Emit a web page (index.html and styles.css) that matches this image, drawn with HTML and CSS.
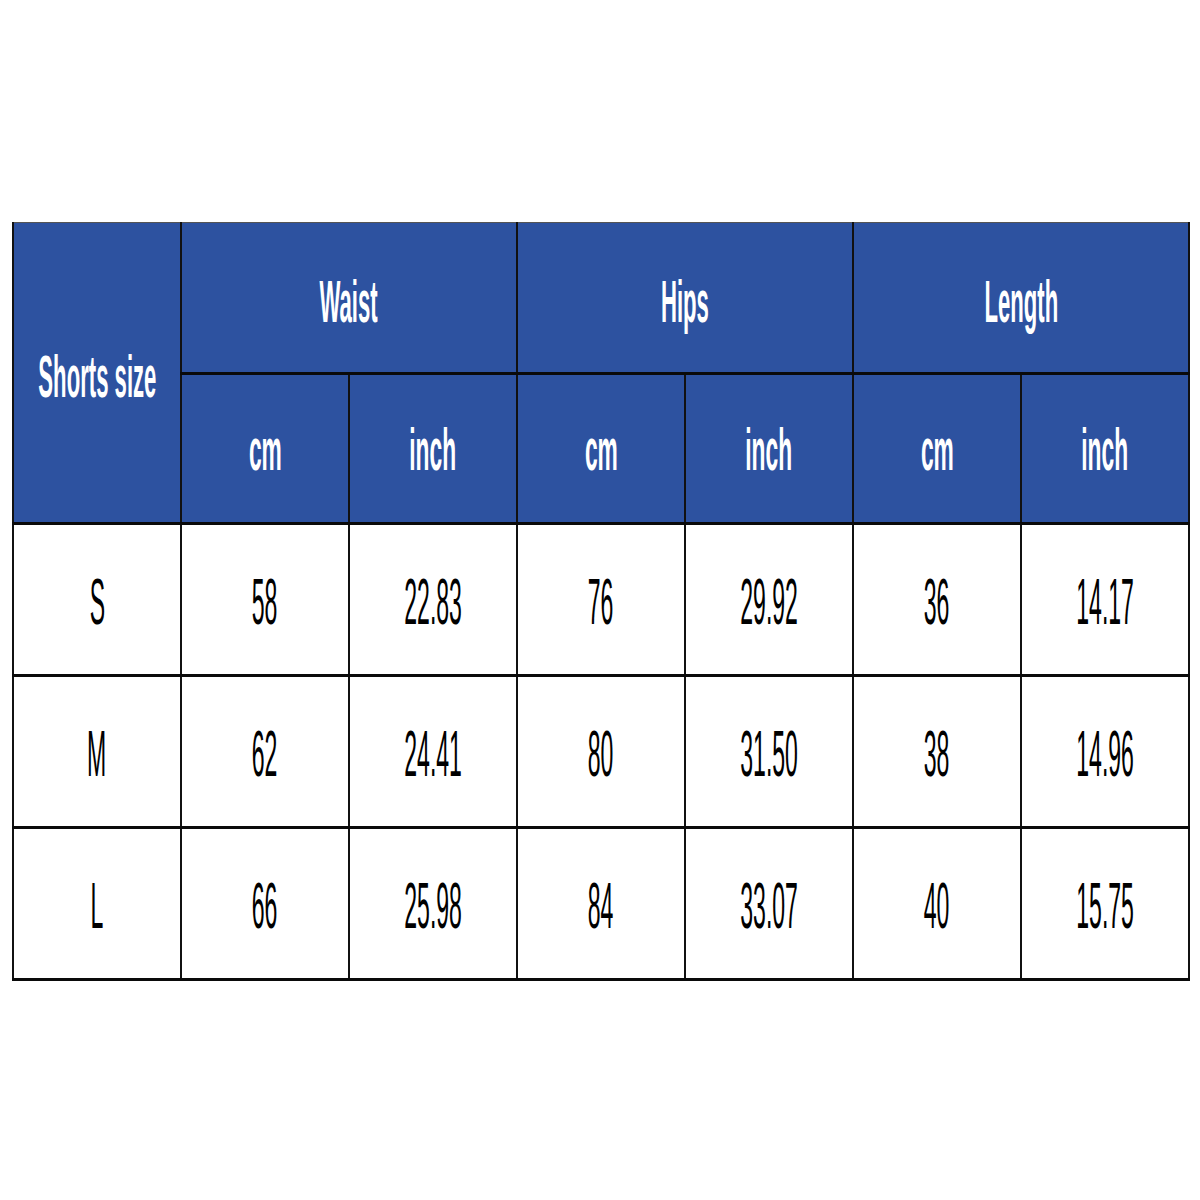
FILE: index.html
```html
<!DOCTYPE html>
<html>
<head>
<meta charset="utf-8">
<link rel="stylesheet" href="styles.css">
</head>
<body>
<table class="size-table">
  <colgroup>
    <col class="c"><col class="c"><col class="c"><col class="c"><col class="c"><col class="c"><col class="c">
  </colgroup>
  <tr class="head1">
    <th rowspan="2" class="size-head"><span class="t">Shorts size</span></th>
    <th colspan="2"><span class="t">Waist</span></th>
    <th colspan="2"><span class="t">Hips</span></th>
    <th colspan="2"><span class="t">Length</span></th>
  </tr>
  <tr class="head2">
    <th><span class="t">cm</span></th>
    <th><span class="t">inch</span></th>
    <th><span class="t">cm</span></th>
    <th><span class="t">inch</span></th>
    <th><span class="t">cm</span></th>
    <th><span class="t">inch</span></th>
  </tr>
  <tr class="data">
    <td><span class="t">S</span></td>
    <td><span class="t">58</span></td>
    <td><span class="t">22.83</span></td>
    <td><span class="t">76</span></td>
    <td><span class="t">29.92</span></td>
    <td><span class="t">36</span></td>
    <td><span class="t">14.17</span></td>
  </tr>
  <tr class="data">
    <td><span class="t">M</span></td>
    <td><span class="t">62</span></td>
    <td><span class="t">24.41</span></td>
    <td><span class="t">80</span></td>
    <td><span class="t">31.50</span></td>
    <td><span class="t">38</span></td>
    <td><span class="t">14.96</span></td>
  </tr>
  <tr class="data">
    <td><span class="t">L</span></td>
    <td><span class="t">66</span></td>
    <td><span class="t">25.98</span></td>
    <td><span class="t">84</span></td>
    <td><span class="t">33.07</span></td>
    <td><span class="t">40</span></td>
    <td><span class="t">15.75</span></td>
  </tr>
</table>
</body>
</html>
```

FILE: styles.css
```css
html, body {
  margin: 0;
  padding: 0;
  background: #ffffff;
}

body {
  font-family: "Liberation Sans", Arial, sans-serif;
}

.size-table {
  margin: 222px 0 0 12px;
  border-collapse: collapse;
  table-layout: fixed;
  width: 1176px;
  border-top: 1px solid #555;
}

.size-table .c {
  width: 168px;
}

.size-table th,
.size-table td {
  padding: 0;
  text-align: center;
  vertical-align: middle;
  border-left: 2px solid #111;
  border-right: 2px solid #111;
  border-bottom: 3px solid #0a0a0a;
  overflow: visible;
  white-space: nowrap;
}

.size-table th {
  background: #2d52a0;
  color: #ffffff;
  font-weight: bold;
}

.t {
  display: inline-block;
  margin: 0 -150px;
  transform: scaleX(0.375);
  transform-origin: center;
}

.head1 th {
  height: 140px;
  font-size: 59px;
  padding-top: 9px;
}

.head1 .size-head {
  padding-top: 8px;
}

.head2 th {
  height: 146px;
  font-size: 60px;
  padding-top: 1px;
}

.head2 .t {
  transform: scaleX(0.38);
}

.data td {
  height: 144px;
  padding-top: 5px;
  font-size: 64px;
  color: #000;
}

.data .t {
  transform: scaleX(0.36);
}
```
